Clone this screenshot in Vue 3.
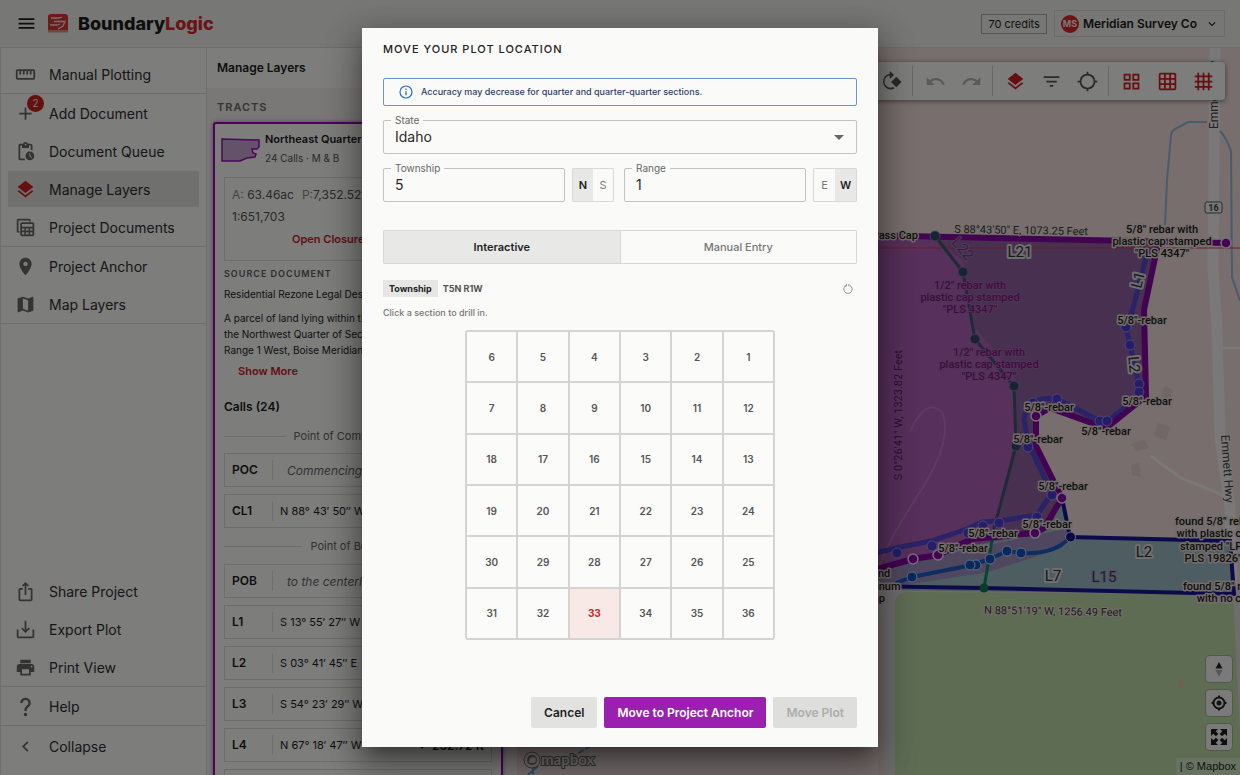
<script setup>
import { ref } from 'vue'

const icons = {
  menu: 'M3 18h18v-2H3v2zm0-5h18v-2H3v2zm0-7v2h18V6H3z',
  ruler: 'M21 6H3c-1.1 0-2 .9-2 2v8c0 1.1.9 2 2 2h18c1.1 0 2-.9 2-2V8c0-1.1-.9-2-2-2zm0 10H3V8h2v4h2V8h2v4h2V8h2v4h2V8h2v4h2V8h2v8z',
  add: 'M19 13h-6v6h-2v-6H5v-2h6V5h2v6h6v2z',
  queue: 'M17 12c-2.76 0-5 2.24-5 5s2.24 5 5 5 5-2.24 5-5-2.24-5-5-5zm1.65 7.35L16.5 17.2V14h1v2.79l1.85 1.85-.7.71zM18 3h-3.18C14.4 1.84 13.3 1 12 1s-2.4.84-2.82 2H6c-1.1 0-2 .9-2 2v15c0 1.1.9 2 2 2h6.11c-.59-.57-1.07-1.25-1.42-2H6V5h2v3h8V5h2v5.08c.71.1 1.38.31 2 .6V5c0-1.1-.9-2-2-2zm-6 2c-.55 0-1-.45-1-1s.45-1 1-1 1 .45 1 1-.45 1-1 1z',
  layers: 'M11.99 18.54l-7.37-5.73L3 14.07l9 7 9-7-1.63-1.27-7.38 5.74zM12 16l7.36-5.73L21 9l-9-7-9 7 1.63 1.27L12 16z',
  tables: 'M2 4c0-1.1.9-2 2-2h12c1.1 0 2 .9 2 2v1h-2V4H4v12h1v2H4c-1.1 0-2-.9-2-2V4zM8 6h12c1.1 0 2 .9 2 2v12c0 1.1-.9 2-2 2H8c-1.1 0-2-.9-2-2V8c0-1.1.9-2 2-2zm0 2v3h12V8H8zm0 5v2.500h2.700V13H8zm4.500 0v2.500h3V13h-3zm4.800 0v2.500H20V13h-2.700zM8 17.300V20h2.700v-2.700H8zm4.500 0V20h3v-2.700h-3zm4.800 0V20H20v-2.700h-2.700z',
  place: 'M12 2C8.130 2 5 5.130 5 9c0 5.250 7 13 7 13s7-7.750 7-13c0-3.870-3.130-7-7-7zm0 9.500a2.500 2.500 0 010-5 2.500 2.500 0 010 5z',
  map: 'M20.500 3l-.16.03L15 5.100 9 3 3.360 4.900c-.21.07-.36.25-.36.48V20.500c0 .28.22.5.5.5l.16-.03L9 18.900l6 2.100 5.640-1.900c.21-.07.36-.25.36-.48V3.500c0-.28-.22-.5-.5-.5zM15 19l-6-2.110V5l6 2.110V19z',
  share: 'M16 5l-1.420 1.420-1.590-1.590V16h-1.980V4.830L9.420 6.420 8 5l4-4 4 4zm4 5v11c0 1.100-.9 2-2 2H6c-1.110 0-2-.9-2-2V10c0-1.110.89-2 2-2h3v2H6v11h12V10h-3V8h3c1.100 0 2 .89 2 2z',
  export: 'M11 2h2v10.200l2.600-2.600L17 11l-5 5-5-5 1.400-1.400 2.600 2.600V2zM2 12h2v8h16v-8h2v8c0 1.100-.9 2-2 2H4c-1.100 0-2-.9-2-2v-8z',
  print: 'M19 8H5c-1.660 0-3 1.340-3 3v6h4v4h12v-4h4v-6c0-1.660-1.340-3-3-3zm-3 11H8v-5h8v5zm3-7c-.55 0-1-.45-1-1s.45-1 1-1 1 .45 1 1-.45 1-1 1zm-1-9H6v4h12V3z',
  help: 'M6 8c0-3.300 2.700-6 6-6s6 2.700 6 6c0 2.400-1.400 3.700-2.700 4.900C14 14 13.300 14.800 13.300 17h-2.700c0-3.200 1.500-4.600 2.800-5.800 1.100-1 1.900-1.700 1.900-3.200 0-1.900-1.500-3.300-3.300-3.300S8.700 6.100 8.700 8H6zm4 13a2 2 0 104 0 2 2 0 10-4 0z',
  left: 'M15.410 7.410L14 6l-6 6 6 6 1.410-1.410L10.830 12z',
  down: 'M16.590 8.590L12 13.170 7.410 8.590 6 10l6 6 6-6z',
  rotate: 'M10 3.100V0l5 4.500L10 9V5.200c-3.400.5-6 3.400-6 6.800 0 3.900 3.100 7 7 7 1 0 2-.2 2.900-.6l1.500 1.500A9 9 0 0111 21a9 9 0 01-1-17.900zM17.500 6.500l6 6-6 6-6-6z',
  undo: 'M12.500 8c-2.650 0-5.050.99-6.900 2.600L2 7v9h9l-3.620-3.620c1.390-1.160 3.160-1.880 5.120-1.880 3.540 0 6.550 2.310 7.600 5.500l2.370-.78C21.080 11.030 17.150 8 12.500 8z',
  redo: 'M18.400 10.600C16.550 8.990 14.150 8 11.500 8c-4.650 0-8.580 3.030-9.960 7.220L3.900 16c1.050-3.190 4.050-5.500 7.600-5.500 1.950 0 3.730.72 5.120 1.880L13 16h9V7l-3.600 3.600z',
  filter: 'M10 18h4v-2h-4v2zM3 6v2h18V6H3zm3 7h12v-2H6v2z',
  locate: 'M11 .8h2v2.300a9 9 0 017.900 7.900h2.300v2h-2.300a9 9 0 01-7.900 7.900v2.300h-2v-2.300A9 9 0 013.100 13H.8v-2h2.300A9 9 0 0111 3.100V.8zM12 5a7 7 0 100 14 7 7 0 000-14z',
  quad: 'M3 3v8h8V3H3zm6 6H5V5h4v4zm-6 4v8h8v-8H3zm6 6H5v-4h4v4zm4-16v8h8V3h-8zm6 6h-4V5h4v4zm-6 4v8h8v-8h-8zm6 6h-4v-4h4v4z',
  grid: 'M20 2H4c-1.100 0-2 .9-2 2v16c0 1.100.9 2 2 2h16c1.100 0 2-.9 2-2V4c0-1.100-.9-2-2-2zM8 20H4v-4h4v4zm0-6H4v-4h4v4zm0-6H4V4h4v4zm6 12h-4v-4h4v4zm0-6h-4v-4h4v4zm0-6h-4V4h4v4zm6 12h-4v-4h4v4zm0-6h-4v-4h4v4zm0-6h-4V4h4v4z',
  hash: 'M22 7V5h-3V2h-2v3h-4V2h-2v3H7V2H5v3H2v2h3v4H2v2h3v4H2v2h3v3h2v-3h4v3h2v-3h4v3h2v-3h3v-2h-3v-4h3v-2h-3V7h3zM7 7h4v4H7V7zm0 10v-4h4v4H7zm10 0h-4v-4h4v4zm0-6h-4V7h4v4z'
}

const navTop = [
  [{ icon: 'ruler', label: 'Manual Plotting' }],
  [
    { icon: 'add', label: 'Add Document', badge: 2 },
    { icon: 'queue', label: 'Document Queue' },
    { icon: 'layers', label: 'Manage Layers', active: true },
    { icon: 'tables', label: 'Project Documents' }
  ],
  [
    { icon: 'place', label: 'Project Anchor' },
    { icon: 'map', label: 'Map Layers' }
  ]
]
const navBottom = [
  [
    { icon: 'share', label: 'Share Project' },
    { icon: 'export', label: 'Export Plot' },
    { icon: 'print', label: 'Print View' }
  ],
  [{ icon: 'help', label: 'Help' }],
  [{ icon: 'left', label: 'Collapse' }]
]

const tools = [
  [{ icon: 'rotate', label: 'Rotate' }],
  [{ icon: 'undo', label: 'Undo', tone: 'faint' }, { icon: 'redo', label: 'Redo', tone: 'faint' }],
  [{ icon: 'layers', label: 'Layers', tone: 'red' }, { icon: 'filter', label: 'Filter' }, { icon: 'locate', label: 'Locate' }],
  [{ icon: 'quad', label: 'Quarters', tone: 'red' }, { icon: 'grid', label: 'Sections', tone: 'red' }, { icon: 'hash', label: 'Townships', tone: 'red' }]
]

const calls = [
  { divider: 'Point of Commencement' },
  { id: 'POC', text: 'Commencing at a point', note: true },
  { id: 'CL1', text: 'N 88° 43′ 50″ W' },
  { divider: 'Point of Beginning' },
  { id: 'POB', text: 'to the centerline', note: true },
  { id: 'L1', text: 'S 13° 55′ 27″ W' },
  { id: 'L2', text: 'S 03° 41′ 45″ E' },
  { id: 'L3', text: 'S 54° 23′ 29″ W' },
  { id: 'L4', text: 'N 67° 18′ 47″ W', dist: '232.72 ft' },
  { id: '', text: '' }
]

// Sections run boustrophedon from the north-east corner of the township.
const sections = []
for (let row = 0; row < 6; row++) {
  const line = Array.from({ length: 6 }, (_, i) => row * 6 + i + 1)
  sections.push(...(row % 2 === 0 ? line.reverse() : line))
}

const state = ref('Idaho')
const township = ref('5')
const range = ref('1')
const ns = ref('N')
const ew = ref('W')
const tab = ref('Interactive')

const violetDots = [[1126, 327], [1130, 345], [1139, 384], [1139, 392], [1057, 399], [1033, 403], [1100, 421], [1107, 421], [1028, 447], [1052, 495], [1037, 517], [999, 523], [983, 526], [968, 533], [932, 546], [897, 553]]
const blueDots = [[912, 577], [976, 565], [970, 565], [990, 559], [1007, 551], [1021, 553]]
const purpleDots = [[1226, 243], [1036, 416], [1062, 498], [1035, 533], [938, 555], [913, 559]]
const tealDots = [[935, 236], [963, 272], [975, 339], [1014, 386], [1016, 446]]
const rebars = [[1142, 324], [1147, 405], [1106, 435], [1049, 411], [1038, 443], [1063, 490], [1047, 528], [993, 537], [963, 552]]
</script>

<template>
  <div class="app">
    <header class="topbar">
      <button class="plain burger" aria-label="Menu"><svg viewBox="0 0 24 24"><path :d="icons.menu" /></svg></button>
      <svg class="logo" viewBox="0 0 20 20">
        <rect width="20" height="15" rx="3" fill="#d93636" />
        <rect y="12" width="20" height="4" fill="#d93636" />
        <rect y="16" width="20" height="2" fill="#dc8f8a" />
        <rect y="18" width="20" height="1" fill="#e4c0bc" />
        <path d="M3 4h8l3-1M6 7.500h11l-2 4.500-5 3M2 11h7l3-1" fill="none" stroke="#f4dedc" stroke-width="1.300" />
      </svg>
      <h1 class="brand">Boundary<span>Logic</span></h1>
      <div class="account">
        <span class="credits">70 credits</span>
        <button class="org">
          <span class="avatar">MS</span>
          <span class="org-name">Meridian Survey Co</span>
          <svg viewBox="0 0 24 24"><path :d="icons.down" /></svg>
        </button>
      </div>
    </header>

    <div class="body">
      <nav class="side">
        <ul v-for="(group, g) in navTop" :key="'t' + g" class="group">
          <li v-for="item in group" :key="item.label">
            <button class="nav-item" :class="{ active: item.active }">
              <svg viewBox="0 0 24 24"><path :d="icons[item.icon]" fill-rule="evenodd" /></svg>
              <span>{{ item.label }}</span>
              <span v-if="item.badge" class="badge">{{ item.badge }}</span>
            </button>
          </li>
        </ul>
        <div class="grow"></div>
        <ul v-for="(group, g) in navBottom" :key="'b' + g" class="group">
          <li v-for="item in group" :key="item.label">
            <button class="nav-item">
              <svg viewBox="0 0 24 24"><path :d="icons[item.icon]" fill-rule="evenodd" /></svg>
              <span>{{ item.label }}</span>
            </button>
          </li>
        </ul>
      </nav>

      <section class="panel">
        <h2 class="panel-head">Manage Layers</h2>
        <div class="panel-body">
          <h3 class="overline">TRACTS</h3>
          <article class="tract">
            <div class="tract-head">
              <svg class="thumb" viewBox="0 0 40 26">
                <path d="M1 2l37 1v7l-2 2-5 0 1 4 3 1-1 3-8 1-7 3H1z" fill="#c6a4d2" stroke="#9a10b0" stroke-width="1.500" />
              </svg>
              <div>
                <h4>Northeast Quarter</h4>
                <p>24 Calls · M &amp; B</p>
              </div>
            </div>
            <div class="stats">
              <p><span><i>A:</i> 63.46ac</span><span><i>P:</i>7,352.52ft</span></p>
              <p>1:651,703</p>
              <button class="link closure">Open Closure Report</button>
            </div>
            <h5 class="doc-title">SOURCE DOCUMENT</h5>
            <p class="doc-name">Residential Rezone Legal Desc.pdf</p>
            <p class="legal">A parcel of land lying within the<br>the Northwest Quarter of Section<br>Range 1 West, Boise Meridian,</p>
            <button class="link more">Show More</button>
            <h4 class="calls-title">Calls (24)</h4>
            <template v-for="(c, i) in calls" :key="i">
              <div v-if="c.divider" class="divider"><span>{{ c.divider }}</span></div>
              <div v-else class="call">
                <b>{{ c.id }}</b>
                <span class="bearing" :class="{ note: c.note }">{{ c.text }}</span>
                <span v-if="c.dist" class="dist"><svg viewBox="0 0 10 12"><path d="M5 1l4 5-4 5-4-5z" /></svg>{{ c.dist }}</span>
              </div>
            </template>
          </article>
        </div>
      </section>

      <main class="map">
        <svg class="canvas" viewBox="517 48 723 727" preserveAspectRatio="xMaxYMin slice">
          <rect x="517" y="48" width="723" height="727" fill="#eeddda" />
          <g fill="#e2cfcb">
            <path d="M1164 386l9 4-3 9-9-2zM1158 423l12 4-4 13-12-4zM1131 444l14-4 4 8-12 3zM1131 465l8-2 2 14-9-2z" />
          </g>
          <g fill="none" stroke="#f4f1f1">
            <path d="M1151 456l30 22 44 18M1218 348h22" stroke-width="3" />
            <path d="M1215 48l-2 220 4 60 3 110 10 70 3 110 9 80" stroke-width="11" />
          </g>
          <path d="M1165 225l2-45 4-45q1-5 6-7l11-6h19M1220 131q6 6 11 20l1 126 8 24" fill="none" stroke="#94b8d8" stroke-width="2" />
          <path d="M878 775V590h362v185z" fill="#dcd9db" />
          <path d="M878 618h6v157h-6z" fill="#e6d2ce" />
          <path d="M895 775V604q0-12 12-12l326 2 4 80 3 60v41z" fill="#bdd8a8" />
          <path d="M862 590l8-40 192-54 8 41 162 5 3 52z" fill="#9abac4" />
          <path d="M860 236l296 8-13 66 3 86-40 31-56-20-14 10v28l26 50-12 34-16 5-97 18-38 12-39 10z" fill="#ae60b6" />
          <path d="M935 240l222 4-14 66 3 86-40 31-56-20-14 10v28l26 50-12 34-55 8 21-102-2-60-39-48-12-67z" fill="#8e60a0" />
          <path d="M862 590l18-22 190-40-8 20-74 24-90 14z" fill="#a07cc0" opacity=".7" />
          <path d="M910 432q15-35 32-20 12 26-22 80-40 60-45 90" fill="none" stroke="#bc78c2" stroke-width="2" />
          <path d="M860 248h380" stroke="#d03a4c" stroke-width="1" />

          <path d="M862 586l120 2 252 6-4-53-160-4-8-39" fill="none" stroke="#1a1598" stroke-width="4" />
          <path d="M896 583l16-6 60-12 18-6 17-8 14 2q34 2 49-16" fill="none" stroke="#1c5cc4" stroke-width="4" />
          <path d="M1148 250l-16 62-6 15 4 18 9 40-1 12-30 24h-8l-43-22q-30-4-33 20l4 24 24 50-15 22-38 6-17 1-15 7-36 12-35 7-20 5" fill="none" stroke="#5546d0" stroke-width="5" />
          <path d="M935 236l28 36 12 67 39 47 2 60-24 90" fill="none" stroke="#3a5470" stroke-width="3" />
          <path d="M993 535l-9 53" stroke="#0d8a62" stroke-width="3" />
          <path d="M860 235l366 8M1158 244l-14 66 2 86-40 32-56-20-14 8v30l26 52-18 30-9 5-63 6-34 16-25 4-50 14" fill="none" stroke="#8406a0" stroke-width="6" />

          <g stroke="#a08fe8" stroke-width="1">
            <circle v-for="(d, i) in violetDots" :key="'v' + i" :cx="d[0]" :cy="d[1]" r="5" fill="#4a3ad0" />
          </g>
          <g stroke="#c4dcf8" stroke-width="1">
            <circle v-for="(d, i) in blueDots" :key="'b' + i" :cx="d[0]" :cy="d[1]" r="5" fill="#1450c0" />
            <circle cx="1070.500" cy="537" r="5" fill="#15108a" />
          </g>
          <g stroke="#8f72b4" stroke-width="1">
            <circle v-for="(d, i) in tealDots" :key="'t' + i" :cx="d[0]" :cy="d[1]" r="5" fill="#2c4866" />
            <circle cx="984" cy="588" r="4.500" fill="#0a7a50" stroke="none" />
          </g>
          <g stroke="#f6dcf8" stroke-width="1.500">
            <circle v-for="(d, i) in purpleDots" :key="'p' + i" :cx="d[0]" :cy="d[1]" r="5" fill="#8406a0" />
          </g>

          <g class="road-label">
            <text transform="translate(1218 129) rotate(-90)">Emmett Hwy</text>
            <text transform="translate(1221 435) rotate(86)">Emmett Hwy</text>
          </g>
          <rect x="1205" y="202" width="17" height="11" rx="2" fill="#f2f2f2" stroke="#555" />
          <text class="shield" x="1213.500" y="211">16</text>

          <g class="pin">
            <text v-for="(r, i) in rebars" :key="i" :x="r[0]" :y="r[1]">5/8"-rebar</text>
            <text x="1162" y="233">5/8" rebar with</text>
            <text x="1162" y="245">plastic cap stamped</text>
            <text x="1162" y="257">"PLS 4347"</text>
            <text x="893" y="239">Brass Cap</text>
            <text x="1215" y="525">found 5/8" rebar</text>
            <text x="1215" y="537">with plastic cap</text>
            <text x="1215" y="550">stamped "LPH</text>
            <text x="1213" y="562">PLS 19826"</text>
            <text x="1223" y="590">found 5/8" rebar</text>
            <text x="1225" y="602">with no cap</text>
            <text x="876" y="577">found</text>
            <text x="876" y="590">aluminum</text>
            <text x="876" y="602">cap</text>
          </g>
          <g class="pin inner">
            <text x="970" y="289">1/2" rebar with</text>
            <text x="970" y="301">plastic cap stamped</text>
            <text x="970" y="313">"PLS 4347"</text>
            <text x="989" y="356">1/2" rebar with</text>
            <text x="989" y="368">plastic cap stamped</text>
            <text x="989" y="380">"PLS 4347"</text>
          </g>
          <g class="dim">
            <text transform="translate(1021 234) rotate(1)">S 88°43'50" E, 1073.25 Feet</text>
            <text transform="translate(1053 615) rotate(1)">N 88°51'19" W, 1256.49 Feet</text>
            <text class="side-dim" transform="translate(902 415) rotate(-90)">S 0°26'41" W, 1323.82 Feet</text>
          </g>
          <g class="line-no">
            <text x="1020" y="257">L21</text>
            <text transform="translate(1143 281) rotate(-76)">L1</text>
            <text transform="translate(1129 365) rotate(85)">L2</text>
            <text x="1144" y="557">L2</text>
            <text x="1053" y="581">L7</text>
            <text class="tint" x="1104" y="582">L15</text>
            <text class="tint dark" transform="translate(959 252) rotate(50)">L22</text>
          </g>
          <path d="M528 775l10-9 34-9 20-12M533 752v23" fill="none" stroke="#5aa4d8" stroke-width="2" stroke-dasharray="6 2" />
          <ellipse cx="1181" cy="684" rx="3" ry="5" fill="#d8c4a2" />
        </svg>

        <a class="mapbox" href="#" aria-label="Mapbox homepage">
          <svg viewBox="0 0 76 20">
            <circle cx="9" cy="10" r="8" fill="#e4dcda" stroke="#777" stroke-width="1" />
            <circle cx="9" cy="10" r="5" fill="#776e6c" />
            <path d="M6 13c0-4 1-6 4-6a3 3 0 010 6z" fill="#e4dcda" />
            <text x="18" y="15">mapbox</text>
          </svg>
        </a>

        <div class="toolbar">
          <div v-for="(group, g) in tools" :key="g" class="tool-group">
            <button v-for="t in group" :key="t.label" class="plain tool" :class="t.tone" :aria-label="t.label">
              <svg viewBox="0 0 24 24"><path :d="icons[t.icon]" fill-rule="evenodd" /></svg>
            </button>
          </div>
        </div>

        <div class="controls">
          <button aria-label="Reset north">
            <svg viewBox="0 0 26 26"><path d="M13 6l3.500 6.500h-7z" fill="#222" /><path d="M13 20.500l-3.500-6.500h7z" fill="#aaa" /></svg>
          </button>
          <button aria-label="Find my location">
            <svg viewBox="0 0 26 26"><g fill="none" stroke="#222" stroke-width="2"><circle cx="13" cy="13" r="5.500" /><path d="M13 5.500v2.500M13 18v2.500M5.500 13H8M18 13h2.500" /></g><circle cx="13" cy="13" r="2.500" fill="#222" /></svg>
          </button>
          <button aria-label="Full screen">
            <svg viewBox="0 0 26 26"><path d="M5 5h7l-2.300 2.300 2.600 2.600-2.400 2.400-2.600-2.600L5 12zM21 5v7l-2.300-2.300-2.600 2.600-2.400-2.400 2.600-2.600L14 5zM5 21v-7l2.300 2.300 2.600-2.600 2.400 2.400-2.600 2.600L12 21zM21 21h-7l2.300-2.300-2.600-2.600 2.400-2.400 2.600 2.600L21 14z" /></svg>
          </button>
        </div>
        <div class="attribution">| <a href="#">© Mapbox</a></div>
      </main>
    </div>

    <div class="backdrop">
      <div class="dialog" role="dialog" aria-labelledby="dialog-title">
        <h2 id="dialog-title">MOVE YOUR PLOT LOCATION</h2>

        <div class="alert">
          <svg viewBox="0 0 14 14" stroke="#2a6cc4"><circle cx="7" cy="7" r="6" stroke-width="1.200" /><path d="M7 6.200v4M7 3.600v1.300" stroke-width="1.300" /></svg>
          Accuracy may decrease for quarter and quarter-quarter sections.
        </div>

        <div class="field">
          <label for="state">State</label>
          <select id="state" v-model="state"><option>Idaho</option><option>Oregon</option></select>
          <svg class="caret" viewBox="0 0 10 5"><path d="M0 0h10L5 5z" /></svg>
        </div>

        <div class="row">
          <div class="field">
            <label for="township">Township</label>
            <input id="township" v-model="township" type="text">
          </div>
          <div class="toggle">
            <button v-for="v in ['N', 'S']" :key="v" :class="{ on: ns === v }" @click="ns = v">{{ v }}</button>
          </div>
          <div class="field">
            <label for="range">Range</label>
            <input id="range" v-model="range" type="text">
          </div>
          <div class="toggle">
            <button v-for="v in ['E', 'W']" :key="v" :class="{ on: ew === v }" @click="ew = v">{{ v }}</button>
          </div>
        </div>

        <div class="tabs">
          <button v-for="v in ['Interactive', 'Manual Entry']" :key="v" :class="{ on: tab === v }" @click="tab = v">{{ v }}</button>
        </div>

        <div class="crumb">
          <span class="chip">Township</span>
          <span class="trs">T5N R1W</span>
          <button class="plain reset" aria-label="Reset">
            <svg viewBox="0 0 12 12" stroke="#999"><path d="M4.500 2.300a4.200 4.200 0 103 0M4.500 .8v2.400H2.200M6.800 1v2.500" /></svg>
          </button>
        </div>
        <p class="hint">Click a section to drill in.</p>

        <div class="plss">
          <button v-for="n in sections" :key="n" :class="{ current: n === 33 }">{{ n }}</button>
        </div>

        <footer class="actions">
          <button>Cancel</button>
          <button class="primary">Move to Project Anchor</button>
          <button disabled>Move Plot</button>
        </footer>
      </div>
    </div>
  </div>
</template>

<style>
html, body { margin: 0; overflow: hidden; }
</style>

<style scoped>
* { box-sizing: border-box; }
.app { position: relative; display: flex; flex-direction: column; height: 100vh; overflow: hidden; background: #fafaf9; color: #1c1c1c; font-family: Inter, "Liberation Sans", sans-serif; font-size: 12px; }
h1, h2, h3, h4, h5, p, ul { margin: 0; padding: 0; font-weight: 600; }
p { font-weight: 400; }
ul { list-style: none; }
button { font-family: inherit; color: inherit; padding: 0; border: 0; background: none; cursor: pointer; }
svg { display: block; fill: currentColor; flex: none; }

.topbar { display: flex; align-items: center; height: 48px; flex: none; padding: 0 15px 0 16px; background: #efeeea; border-bottom: 1px solid #dcdbd6; }
.burger svg { width: 21px; height: 21px; }
.logo { width: 20px; height: 20px; margin-left: 11px; }
.brand { margin-left: 10px; font-size: 18px; font-weight: 800; }
.brand span { color: #cf2a2e; }
.account { display: flex; align-items: center; gap: 7px; margin-left: auto; }
.credits { height: 20px; padding: 0 6px; border: 1px solid #a8a8a4; line-height: 18px; font-size: 11px; }
.org { display: flex; align-items: center; height: 27px; padding: 0 5px 0 6px; border: 1px solid #dad9d4; font-size: 12px; font-weight: 600; }
.avatar { width: 18px; height: 18px; border-radius: 50%; background: #d8262a; color: #f4efec; font-size: 9px; line-height: 18px; font-weight: 700; text-align: center; }
.org-name { margin: 0 8px 0 4px; }
.org svg { width: 14px; height: 14px; }

.body { display: flex; flex: 1; min-height: 0; }
.side { display: flex; flex-direction: column; width: 207px; flex: none; padding: 7px 0 10px; border: solid #dededb; border-width: 0 1px; }
.group + .group { border-top: 1px solid #dcdcd9; }
.group:nth-child(3) { border-bottom: 1px solid #dcdcd9; }
.group:last-child { padding-top: 1px; }
.group li { padding: 1px 7px; }
.grow { flex: 1; }
.nav-item { position: relative; display: flex; align-items: center; gap: 13px; width: 100%; height: 36px; padding: 0 7px; font-size: 14px; text-align: left; color: #2e2e2e; }
.nav-item svg { width: 21px; height: 21px; color: #666; }
.nav-item.active { background: #e0e0de; }
.nav-item.active svg { color: #cc2024; }
.badge { position: absolute; left: 19px; top: 0; width: 17px; height: 17px; border-radius: 50%; background: #c8201f; color: #f6e6e4; font-size: 10px; line-height: 17px; text-align: center; }

.panel { width: 310px; flex: none; overflow: hidden; background: #f2f1ee; }
.panel-head { height: 40px; padding-left: 10px; background: #fafaf9; font-size: 12px; line-height: 40px; }
.panel-body { padding: 12px 14px 0 6px; }
.overline { padding-left: 4px; font-size: 11px; line-height: 14px; letter-spacing: 1px; color: #6a6a68; }
.tract { margin-top: 8px; padding: 9px; border: 2px solid #9708ad; border-radius: 3px; background: #fafaf9; box-shadow: 0 0 4px #b878c4; }
.tract-head { display: flex; gap: 4px; height: 44px; margin-left: -3px; }
.thumb { width: 40px; height: 26px; margin-top: 4px; }
.tract-head h4 { font-size: 11px; line-height: 12px; white-space: nowrap; }
.tract-head p { margin-top: 7px; font-size: 10px; line-height: 12px; color: #555; }
.stats { height: 84px; padding: 6px 7px; border: 1px solid #dadad6; text-align: center; white-space: nowrap; overflow: hidden; }
.stats p { display: flex; gap: 8px; font-size: 12px; line-height: 22px; text-align: left; color: #555; }
.stats i { font-style: normal; color: #888; }
.link { color: #c8202a; font-size: 11px; font-weight: 600; line-height: 16px; }
.closure { display: block; margin: 3px 0 0 60px; }
.doc-title { margin-top: 7px; font-size: 9px; line-height: 12px; letter-spacing: 1px; color: #5c5c5a; }
.doc-name { margin-top: 7px; font-size: 10px; line-height: 14px; white-space: nowrap; }
.legal { margin-top: 9px; font-size: 10px; line-height: 16px; white-space: nowrap; }
.more { display: block; margin: 5px 0 0 14px; }
.calls-title { margin: 20px 0 4px; font-size: 12px; line-height: 16px; }
.divider { display: flex; align-items: center; gap: 8px; height: 36px; font-size: 11px; color: #666; }
.calls-title + .divider { height: 34px; }
.call + .divider { margin-top: -7px; }
.divider::before, .divider::after { content: ""; flex: 1; height: 1px; background: #dadad6; }
.call { display: flex; align-items: center; height: 34px; margin-bottom: 7px; padding: 0 7px; border: 1px solid #dadad6; font-size: 12px; white-space: nowrap; overflow: hidden; }
.call b { width: 41px; height: 20px; line-height: 20px; border-right: 1px solid #dededa; font-weight: 600; flex: none; }
.bearing { padding-left: 7px; font-size: 11px; }
.note { padding-left: 14px; font-style: italic; font-size: 12px; color: #666; }
.dist { display: flex; align-items: center; gap: 6px; margin-left: auto; font-weight: 600; }
.dist svg { width: 8px; height: 10px; }

.map { position: relative; flex: 1; min-width: 0; overflow: hidden; }
.canvas { width: 100%; height: 100%; }
.canvas text { font-family: Roboto, sans-serif; text-anchor: middle; paint-order: stroke; stroke-linejoin: round; }
.pin text { font-size: 11px; font-weight: 500; fill: #1c1c1c; stroke: #e6dad7; stroke-width: 3px; }
.canvas .inner text { fill: #84167e; stroke: #9c68ac; stroke-width: 2px; }
.dim text { font-size: 11px; fill: #383838; stroke: #ecdedb; stroke-width: 2px; }
.canvas .side-dim { fill: #5e1468; stroke: #b264ba; }
.line-no text { font-size: 15px; fill: #333; stroke: #dedade; stroke-width: 4px; }
.canvas .tint { fill: #44386a; stroke: #9ca4c4; stroke-width: 2px; }
.canvas .dark { fill: #70348e; stroke: #a678b4; }
.canvas .road-label text { font-size: 12px; fill: #444; stroke: #f4f1f1; stroke-width: 2px; text-anchor: start; }
.canvas .shield { font-size: 9px; font-weight: 700; fill: #444; }

.mapbox { position: absolute; left: 6px; bottom: 5px; }
.mapbox svg { width: 76px; height: 20px; }
.mapbox text { font: 700 15px Lato, sans-serif; fill: #e8e0de; stroke: #666; stroke-width: 2px; paint-order: stroke; }

.toolbar { position: absolute; top: 14px; right: 15px; display: flex; align-items: center; height: 38px; padding: 3px 4px; border-radius: 3px; background: #fbfbf9; box-shadow: 0 1px 5px rgba(0, 0, 0, .5); }
.tool-group { display: flex; }
.tool-group + .tool-group { margin-left: 3px; padding-left: 4px; border-left: 1px solid #cfcfcb; }
.tool { display: flex; align-items: center; justify-content: center; width: 36px; height: 30px; color: #555; }
.tool svg { width: 21px; height: 21px; }
.tool.faint { color: #b4b4b2; }
.tool.red { color: #cc1c20; }

.controls { position: absolute; right: 8px; bottom: 25px; display: flex; flex-direction: column; gap: 8px; }
.controls button { width: 26px; height: 26px; border-radius: 4px; background: #f4f4f4; box-shadow: 0 0 0 1px rgba(0, 0, 0, .15); }
.attribution { position: absolute; right: 0; bottom: 0; padding: 0 4px; background: rgba(255, 255, 255, .3); font: 11px/17px "Liberation Sans", sans-serif; color: #222; }
.attribution a { color: inherit; text-decoration: none; }

.backdrop { position: absolute; inset: 0; display: flex; align-items: center; justify-content: center; background: rgba(0, 0, 0, .5); }
.dialog { width: 516px; max-width: 90%; padding: 14px 21px 19px; background: #fafaf8; color: #222; box-shadow: 0 11px 15px -7px rgba(0, 0, 0, .3), 0 20px 34px 3px rgba(0, 0, 0, .28), 0 6px 32px 4px rgba(0, 0, 0, .2); }
.dialog h2 { font-size: 11px; font-weight: 500; line-height: 14px; letter-spacing: 1px; }
.alert { display: flex; align-items: center; gap: 8px; height: 28px; margin: 22px 0 14px; padding: 0 15px; border: 1px solid #6c94cc; border-radius: 2px; font-size: 9px; font-weight: 500; color: #2f3e66; }
.alert svg { width: 14px; height: 14px; fill: none; }
.field { position: relative; flex: 1; min-width: 0; }
.field label { position: absolute; left: 8px; top: -7px; padding: 0 4px; background: #fafaf8; font-size: 10px; line-height: 14px; color: #666; }
.field input, .field select { display: block; width: 100%; height: 34px; padding: 0 11px; border: 1px solid #c2c2be; border-radius: 2px; background: transparent; color: #2a2a2a; font: 14px Inter, sans-serif; appearance: none; outline: 0; }
.caret { position: absolute; right: 13px; top: 15px; width: 10px; height: 5px; color: #666; }
.row { display: flex; gap: 7px; margin-top: 14px; }
.toggle { display: flex; flex: none; height: 34px; border: 1px solid #d8d8d4; border-radius: 1px; }
.toggle + .field { margin-left: 3px; }
.toggle button { width: 20px; font-size: 11px; color: #777; }
.toggle:last-child button { width: 21px; }
.toggle .on, .tabs .on { background: #e8e8e6; color: #1e1e1e; font-weight: 600; }
.tabs { display: flex; height: 34px; margin-top: 28px; border: 1px solid #d8d8d4; border-radius: 1px; }
.tabs button { flex: 1; font-size: 11px; font-weight: 500; color: #777; }
.tabs button + button { border-left: 1px solid #d8d8d4; }
.crumb { display: flex; align-items: center; height: 18px; margin-top: 16px; }
.chip { padding: 0 6px; background: #e6e6e4; font-size: 9px; font-weight: 700; line-height: 17px; }
.trs { margin-left: 5px; font-size: 9px; font-weight: 700; color: #555; }
.reset { margin-left: auto; margin-right: 3px; }
.reset svg { width: 12px; height: 12px; fill: none; }
.hint { margin-top: 8px; font-size: 9px; font-weight: 500; line-height: 14px; color: #777; }
.plss { display: grid; grid-template-columns: repeat(6, 1fr); gap: 2px; width: 310px; margin: 10px auto 0; border: 2px solid #d4d4d0; border-radius: 3px; background: #d4d4d0; overflow: hidden; }
.plss button { aspect-ratio: 1; background: #fbfbf9; font-size: 10px; font-weight: 600; color: #555; }
.plss .current { background: #f8e9e6; color: #c62828; font-weight: 700; }
.actions { display: flex; justify-content: flex-end; gap: 7px; margin-top: 57px; }
.actions button { height: 31px; padding: 0 13px; border-radius: 2px; background: #e2e2e0; font-size: 12px; font-weight: 600; }
.actions .primary { background: #9c20b0; color: #fff; }
.actions button:disabled { background: #dededc; color: #adadab; }
</style>
